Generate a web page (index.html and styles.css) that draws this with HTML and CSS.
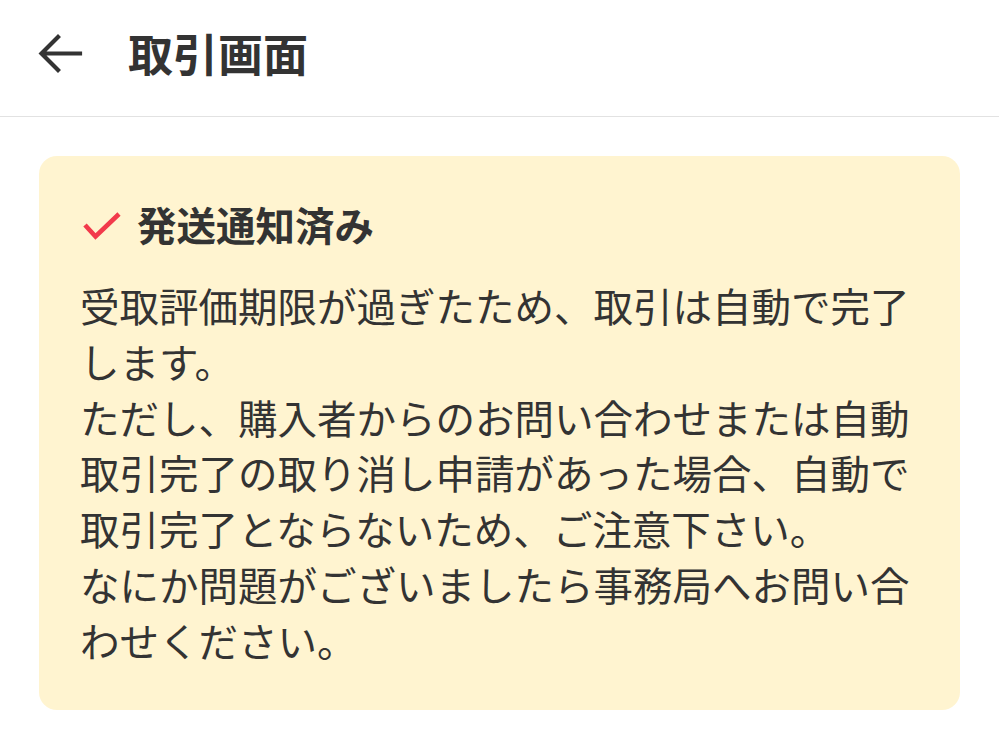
FILE: index.html
```html
<!DOCTYPE html>
<html lang="ja">
<head>
<meta charset="utf-8">
<title>取引画面</title>
<link rel="stylesheet" href="styles.css">
</head>
<body>
<header class="topbar">
  <svg class="back" viewBox="0 0 48 48" width="48" height="48" aria-hidden="true">
    <path d="M44 24.5 H7 M22 8 L5.5 24.5 L22 41" fill="none" stroke="#333" stroke-width="4.2" stroke-linecap="square"/>
  </svg>
  <h1 class="title">取引画面</h1>
</header>
<main class="content">
  <section class="notice">
    <div class="notice-head">
      <svg class="check" viewBox="0 0 40 30" width="40" height="30" aria-hidden="true">
        <path d="M3 14 L13.5 25.5 L37 3" fill="none" stroke="#f23a4b" stroke-width="4.6"/>
      </svg>
      <h2 class="notice-title">発送通知済み</h2>
    </div>
    <p class="notice-body">受取評価期限が過ぎたため、取引は自動で完了します。<br>ただし、購入者からのお問い合わせまたは自動取引完了の取り消し申請があった場合、自動で取引完了とならないため、ご注意下さい。<br>なにか問題がございましたら事務局へお問い合わせください。</p>
  </section>
</main>
</body>
</html>
```
FILE: styles.css
```css
html, body {
  margin: 0;
  padding: 0;
  background: #ffffff;
  color: #333333;
  font-family: "Noto Sans CJK JP", "Noto Sans", sans-serif;
}

.topbar {
  display: flex;
  align-items: center;
  height: 117px;
  box-sizing: border-box;
  padding: 0 0 10px 36px;
  border-bottom: 1px solid #e2e2e2;
}

.back {
  display: block;
  width: 48px;
  height: 48px;
  flex: none;
}

.title {
  margin: 0 0 0 44px;
  font-size: 45px;
  font-weight: 700;
  line-height: 1.2;
  color: #333333;
}

.content {
  padding: 39px 39px 0;
}

.notice {
  background: #fff4d0;
  border-radius: 18px;
  padding: 40px 41px 42px;
}

.notice-head {
  display: flex;
  align-items: center;
  height: 56px;
  padding-left: 42px;
  position: relative;
}

.check {
  position: absolute;
  left: 2px;
  top: 15px;
}

.notice-title {
  margin: 0 0 0 15px;
  font-size: 39.5px;
  font-weight: 700;
  line-height: 56px;
}

.notice-body {
  margin: 25px 0 0;
  font-size: 39.5px;
  line-height: 55.8px;
  font-weight: 400;
}
```
